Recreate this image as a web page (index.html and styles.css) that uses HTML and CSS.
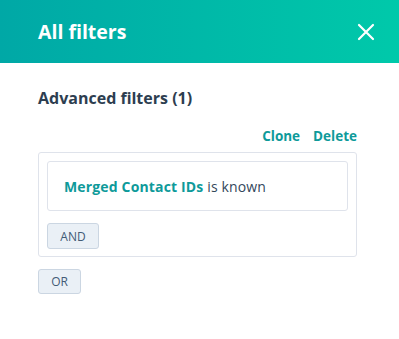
FILE: index.html
```html
<!DOCTYPE html>
<html>
<head>
<meta charset="utf-8">
<link rel="stylesheet" href="styles.css">
</head>
<body>
<div class="panel">
  <header class="header">
    <h1 class="title">All filters</h1>
    <button class="close" aria-label="Close">
      <svg width="18" height="18" viewBox="0 0 18 18"><path d="M2 2L16 16M16 2L2 16" stroke="#fff" stroke-width="2.2" stroke-linecap="round"/></svg>
    </button>
  </header>
  <main class="content">
    <h2 class="section">Advanced filters (1)</h2>
    <div class="actions">
      <a class="link">Clone</a>
      <a class="link">Delete</a>
    </div>
    <div class="group">
      <div class="rule"><span class="prop">Merged Contact IDs</span> is known</div>
      <button class="btn btn-and">AND</button>
    </div>
    <button class="btn btn-or">OR</button>
  </main>
</div>
</body>
</html>
```

FILE: styles.css
```css
* { box-sizing: border-box; }
html, body { margin: 0; padding: 0; background: #fff; }
body { font-family: "Open Sans", "Lato", sans-serif; color: #33475b; }
.panel { width: 399px; height: 339px; overflow: hidden; }
.header {
  height: 63px;
  background: linear-gradient(to right, #00a8a6, #00c9aa);
  display: flex;
  align-items: center;
  justify-content: space-between;
  padding: 0 24px 0 38px;
}
.title { margin: 0; color: #fff; font-size: 19.5px; font-weight: 700; }
.close { background: none; border: 0; padding: 0; display: flex; cursor: pointer; }
.content { padding: 24px 42px 0 38px; display: flex; flex-direction: column; align-items: flex-start; }
.section { margin: 0; font-size: 16px; font-weight: 700; color: #2d3e50; line-height: 22px; }
.actions { align-self: stretch; display: flex; justify-content: flex-end; gap: 13px; margin-top: 18px; line-height: 18px; }
.link { color: #0e9a9a; font-weight: 700; font-size: 13.5px; }
.group {
  align-self: stretch;
  margin-top: 7px;
  border: 1px solid #dfe3eb;
  border-radius: 3px;
  padding: 8px 8px 7px 8px;
  display: flex;
  flex-direction: column;
  align-items: flex-start;
}
.rule {
  align-self: stretch;
  border: 1px solid #dfe3eb;
  border-radius: 3px;
  height: 50px;
  padding: 0 16px;
  display: flex;
  align-items: center;
  font-size: 14px;
  letter-spacing: 0.15px;
  color: #33475b;
  white-space: pre;
}
.prop { color: #0e9a9a; font-weight: 700; }
.btn {
  font-family: inherit;
  background: #eaf0f6;
  border: 1px solid #cbd6e2;
  border-radius: 3px;
  color: #425b76;
  font-size: 12px;
  padding: 0;
}
.btn-and { margin-top: 12px; width: 52px; height: 26px; }
.btn-or { margin-top: 12px; width: 43px; height: 25px; }
```
